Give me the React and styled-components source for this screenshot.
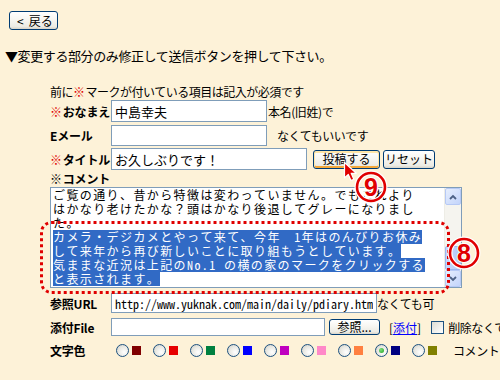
import React from "react";
import styled, { createGlobalStyle } from "styled-components";

const Global = createGlobalStyle`
  html, body { margin: 0; padding: 0; background: #fdf2d8; }
  body {
    font-family: "Noto Sans CJK JP", "Noto Sans", sans-serif;
    font-size: 12px;
    color: #000;
  }
`;

const mono = `"Noto Sans Mono CJK JP", "Noto Sans CJK JP", monospace`;

const Page = styled.div`
  position: relative;
  width: 500px;
  height: 380px;
  overflow: hidden;
  padding-top: 11px;
  box-sizing: border-box;
`;

const XpButton = styled.button`
  font-family: inherit;
  font-size: 12px;
  color: #000;
  width: ${p => p.w}px;
  height: ${p => p.h || 19}px;
  margin: 0 0 0 ${p => p.ml || 0}px;
  padding: 0;
  flex-shrink: 0;
  border: 1px solid #003c74;
  border-radius: 3px;
  background: linear-gradient(#ffffff 0%, #f7f6f1 45%, #ecebe4 85%, #d8d4c8 100%);
  box-shadow: ${p => p.hot ? "inset 0 1px 0 1px #ffe6a8, inset 0 -1px 0 1px #f4a83a" : "none"};
  display: flex;
  align-items: center;
  justify-content: center;
  line-height: 1;
`;

const BackButton = styled(XpButton)`
  margin-left: 9px;
  justify-content: flex-start;
  padding-left: 7px;
  gap: 5px;
`;

const Instruction = styled.div`
  margin: 19px 0 0 5px;
  font-size: 13px;
  line-height: 14px;
  letter-spacing: -0.4px;
`;

const Form = styled.div`
  margin-top: 22px;
  padding-left: 50px;
  display: flex;
  flex-direction: column;
`;

const Note = styled.div`
  height: 14px;
  line-height: 14px;
  letter-spacing: -0.5px;
`;

const Row = styled.div`
  display: flex;
  align-items: center;
  height: ${p => p.h}px;
  margin-top: ${p => p.mt || 0}px;
  white-space: nowrap;
`;

const Label = styled.div`
  width: 61px;
  flex-shrink: 0;
  font-weight: bold;
  font-size: 12px;
  letter-spacing: -0.2px;
`;

const Mark = styled.span`
  color: ${p => p.black ? "#000" : "#e00000"};
  margin-right: 1px;
`;

const Field = styled.input`
  width: ${p => p.w}px;
  height: 100%;
  flex-shrink: 0;
  box-sizing: border-box;
  border: 1px solid #7f9db9;
  background: #fff;
  margin: 0;
  padding: 0 3px;
  font-family: ${p => p.mono ? mono : "inherit"};
  font-size: ${p => p.fs || 13}px;
  color: #000;
  outline: none;
`;

const Hint = styled.span`
  margin-left: ${p => p.ml || 0}px;
  letter-spacing: -0.4px;
  flex-shrink: 0;
`;

const TextBox = styled.div`
  width: 412px;
  height: 101px;
  margin-top: 1px;
  box-sizing: border-box;
  border: 1px solid #7f9db9;
  background: #fff;
  display: flex;
`;

const TextBody = styled.div`
  flex: 1;
  overflow: hidden;
  padding-left: 2px;
  font-family: ${mono};
  font-size: 12px;
  letter-spacing: 1.4px;
  line-height: 14px;
  white-space: pre;
`;

const Line = styled.div`
  width: fit-content;
  height: 14px;
  background: ${p => p.sel ? "#316ac5" : "transparent"};
  color: ${p => p.sel ? "#fff" : "#000"};
`;

const Scrollbar = styled.div`
  width: 16px;
  flex-shrink: 0;
  display: flex;
  flex-direction: column;
  background: #f5f4ef;
  border-left: 1px solid #eeede6;
`;

const ScrollBtn = styled.div`
  height: 17px;
  box-sizing: border-box;
  border: 1px solid #b6c9f5;
  border-radius: 2px;
  background: linear-gradient(135deg, #e6eefd, #c3d4fb);
  display: flex;
  align-items: center;
  justify-content: center;
`;

const Thumb = styled.div`
  margin-top: auto;
  height: 24px;
  box-sizing: border-box;
  border: 1px solid #9db6ef;
  border-radius: 2px;
  background: linear-gradient(90deg, #c9d8fc, #b3c8f6);
`;

const Link = styled.span`
  color: #0000ff;
  text-decoration: underline;
`;

const Bracket = styled.span`
  margin-left: 9px;
  flex-shrink: 0;
`;

const Check = styled.span`
  width: 13px;
  height: 13px;
  box-sizing: border-box;
  border: 1px solid #1c5180;
  background: linear-gradient(135deg, #dcdcd4, #ffffff);
  margin-left: 10px;
  flex-shrink: 0;
`;

const Swatches = styled.div`
  display: flex;
  margin-left: 5px;
  flex-shrink: 0;
`;

const Swatch = styled.div`
  width: 37px;
  display: flex;
  align-items: center;
`;

const Radio = styled.span`
  width: 13px;
  height: 13px;
  box-sizing: border-box;
  border-radius: 50%;
  border: 1px solid #1c5180;
  background: radial-gradient(circle at 65% 65%, #ffffff 0%, #e8e8e2 55%, #c9c8bf 100%);
  display: flex;
  align-items: center;
  justify-content: center;
  &::after {
    content: "";
    display: ${p => p.on ? "block" : "none"};
    width: 5px;
    height: 5px;
    border-radius: 50%;
    background: radial-gradient(circle at 35% 35%, #7be07b, #21a121);
  }
`;

const Square = styled.span`
  width: 9px;
  height: 9px;
  margin-left: 3px;
  background: ${p => p.c};
`;

const Overlay = styled.svg`
  position: absolute;
  left: ${p => p.x}px;
  top: ${p => p.y}px;
  overflow: visible;
  pointer-events: none;
`;

const Circled = ({ x, y, n }) => (
  <Overlay x={x} y={y} width="32" height="32" viewBox="0 0 32 32">
    <circle cx="16" cy="16" r="14" fill="none" stroke="#fff" strokeWidth="5" />
    <circle cx="16" cy="16" r="14" fill="none" stroke="#e00000" strokeWidth="2.6" />
    <text x="16" y="25" textAnchor="middle" fontSize="25" fontWeight="bold"
      fontFamily="Liberation Sans, Arial, sans-serif" fill="#e00000"
      stroke="#fff" strokeWidth="2" paintOrder="stroke">{n}</text>
  </Overlay>
);

const colors = ["#800000", "#e60000", "#008040", "#0000ff", "#c000c0", "#ff88c8", "#ff8040", "#000080", "#808000"];

const lines = [
  ["ご覧の通り、昔から特徴は変わっていません。でもこれより", false],
  ["はかなり老けたかな？頭はかなり後退してグレーになりまし", false],
  ["た。", false],
  ["カメラ・デジカメとやって来て、今年　1年はのんびりお休み", true],
  ["して来年から再び新しいことに取り組もうとしています。", true],
  ["気ままな近況は上記のNo.1 の横の家のマークをクリックする", true],
  ["と表示されます。", true],
];

const Chevron = ({ down }) => (
  <svg width="8" height="6" viewBox="0 0 8 6">
    <path d={down ? "M1 1 L4 4 L7 1" : "M1 5 L4 2 L7 5"} fill="none" stroke="#4d6185" strokeWidth="1.8" />
  </svg>
);

export default function App() {
  return (
    <Page>
      <Global />
      <BackButton w={49}><span>&lt;</span><span>戻る</span></BackButton>
      <Instruction>▼変更する部分のみ修正して送信ボタンを押して下さい。</Instruction>
      <Form>
        <Note>前に<Mark>※</Mark>マークが付いている項目は記入が必須です</Note>
        <Row h={22} mt={1}>
          <Label><Mark>※</Mark>おなまえ</Label>
          <Field w={156} defaultValue="中島幸夫" readOnly />
          <Hint ml={1}>本名(旧姓)で</Hint>
        </Row>
        <Row h={21} mt={3}>
          <Label>Eメール</Label>
          <Field w={156} defaultValue="" readOnly />
          <Hint ml={10}>なくてもいいです</Hint>
        </Row>
        <Row h={22} mt={2}>
          <Label><Mark>※</Mark>タイトル</Label>
          <Field w={196} defaultValue="お久しぶりです！" readOnly />
          <XpButton w={67} ml={6} hot>投稿する</XpButton>
          <XpButton w={52} ml={3}>リセット</XpButton>
        </Row>
        <Row h={16}>
          <Label><Mark black>※</Mark>コメント</Label>
        </Row>
        <TextBox>
          <TextBody>
            {lines.map(([t, sel], i) => <Line key={i} sel={sel}>{t}</Line>)}
          </TextBody>
          <Scrollbar>
            <ScrollBtn><Chevron /></ScrollBtn>
            <Thumb />
            <ScrollBtn><Chevron down /></ScrollBtn>
          </Scrollbar>
        </TextBox>
        <Row h={20} mt={5}>
          <Label>参照URL</Label>
          <Field w={266} fs={12} mono defaultValue="http://www.yuknak.com/main/daily/pdiary.htm" readOnly />
          <Hint>なくても可</Hint>
        </Row>
        <Row h={18} mt={5}>
          <Label>添付File</Label>
          <Field w={214} defaultValue="" readOnly />
          <XpButton w={51} h={16} ml={4}>参照...</XpButton>
          <Bracket>[<Link>添付</Link>]</Bracket>
          <Check />
          <Hint ml={4}>削除なくても可</Hint>
        </Row>
        <Row h={14} mt={7}>
          <Label>文字色</Label>
          <Swatches>
            {colors.map((c, i) => (
              <Swatch key={c}>
                <Radio on={i === 7} />
                <Square c={c} />
              </Swatch>
            ))}
          </Swatches>
          <Hint ml={4}>コメントを</Hint>
        </Row>
      </Form>

      <Overlay x={38} y={220} width="414" height="75" viewBox="0 0 414 75">
        <rect x="3.5" y="2.5" width="407" height="70" rx="10" fill="none"
          stroke="#e00000" strokeWidth="3" strokeDasharray="3 3" />
      </Overlay>
      <Circled x={355} y={171} n="9" />
      <Circled x={448} y={237} n="8" />
      <Overlay x={343} y={161} width="16" height="22" viewBox="0 0 16 22">
        <path d="M1.5 1.5 L1.5 17 L5.3 13.4 L8 19.5 L10.8 18.3 L8.2 12.3 L13.3 12.3 Z"
          fill="#e00000" stroke="#fff" strokeWidth="1.2" strokeLinejoin="round" />
      </Overlay>
    </Page>
  );
}
